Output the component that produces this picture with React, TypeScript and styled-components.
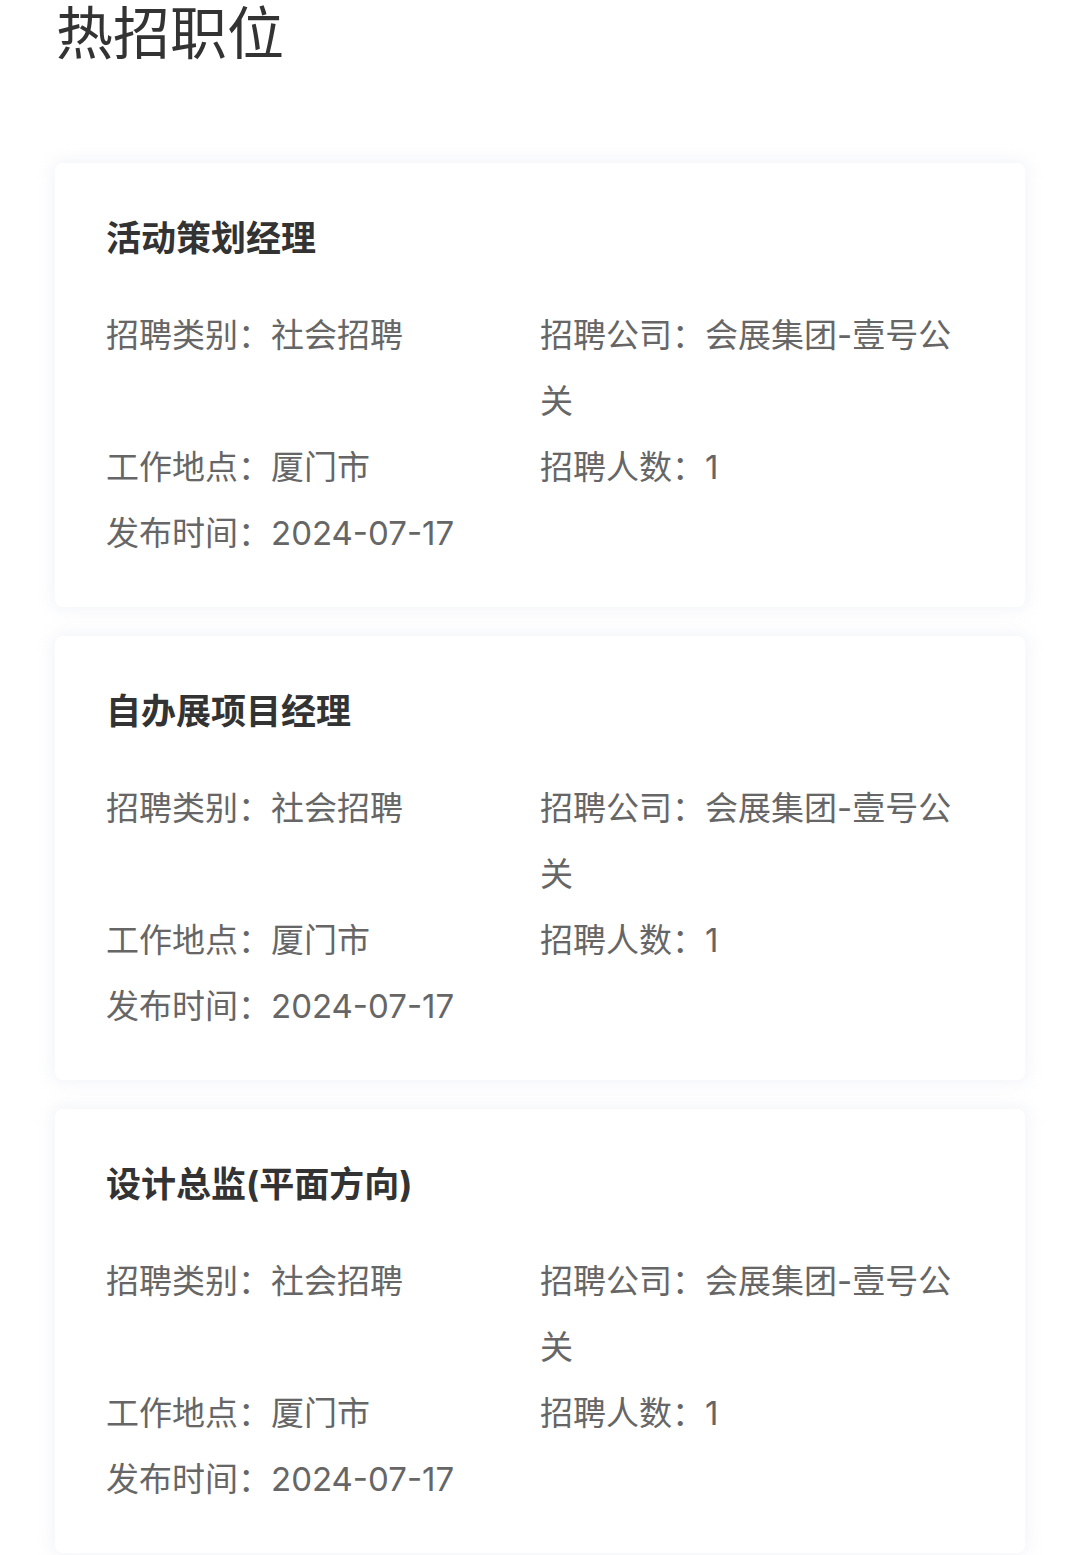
import styled, { createGlobalStyle } from 'styled-components'

const GlobalStyle = createGlobalStyle`
  body {
    margin: 0;
    background: #fff;
    font-family: Inter, "Noto Sans CJK SC", "Noto Sans", sans-serif;
  }
`

const Page = styled.div`
  padding: 0 55px 2px;
`

const Heading = styled.h1`
  margin: 0;
  padding: 0 0 0 1px;
  height: 163px;
  font-size: 57px;
  line-height: 68px;
  font-weight: 400;
  color: #333;
`

const List = styled.div`
  display: flex;
  flex-direction: column;
  gap: 29px;
`

const Card = styled.div`
  background: #fff;
  border-radius: 8px;
  box-shadow: 0 0 16px 4px rgba(230, 233, 242, 0.45);
  padding: 50px 51px 41px;
  height: 444px;
  box-sizing: border-box;
`

const Title = styled.div`
  font-size: 35px;
  line-height: 50px;
  font-weight: 700;
  color: #333;
  margin-bottom: 39px;
`

const Fields = styled.div`
  display: grid;
  grid-template-columns: 1fr 1fr;
`

const Field = styled.div`
  font-size: 33px;
  line-height: 66px;
  color: #666;
`

type Job = { title: string }

const jobs: Job[] = [
  { title: '活动策划经理' },
  { title: '自办展项目经理' },
  { title: '设计总监(平面方向)' },
]

function JobCard({ job }: { job: Job }) {
  return (
    <Card>
      <Title>{job.title}</Title>
      <Fields>
        <Field>招聘类别：社会招聘</Field>
        <Field>招聘公司：会展集团-壹号公关</Field>
        <Field>工作地点：厦门市</Field>
        <Field>招聘人数：1</Field>
        <Field>发布时间：2024-07-17</Field>
      </Fields>
    </Card>
  )
}

export default function App() {
  return (
    <Page>
      <GlobalStyle />
      <Heading>热招职位</Heading>
      <List>
        {jobs.map((job) => (
          <JobCard key={job.title} job={job} />
        ))}
      </List>
    </Page>
  )
}
